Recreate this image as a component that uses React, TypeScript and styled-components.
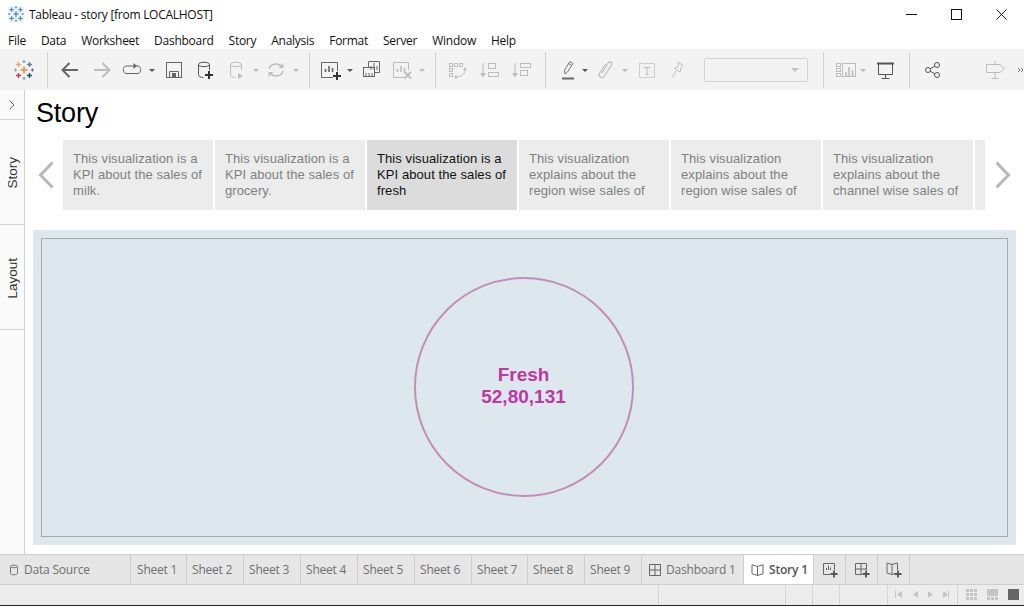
import React from "react";
import styled, { createGlobalStyle } from "styled-components";

const GlobalStyle = createGlobalStyle`
  html, body { margin: 0; padding: 0; background: #fff; }
  body { font-family: "Liberation Sans", Arial, sans-serif; }
`;

const Page = styled.div`
  width: 1024px;
  height: 606px;
  display: flex;
  flex-direction: column;
  overflow: hidden;
  background: #fff;
`;

const TitleBar = styled.div`
  height: 28px;
  display: flex;
  align-items: center;
  padding-left: 8px;
  font: 12px "Open Sans", sans-serif;
  letter-spacing: -0.27px;
  color: #111;
  svg { margin-right: 5px; }
`;

const WindowControls = styled.div`
  margin-left: auto;
  display: flex;
  svg { display: block; margin: 0; }
`;

const WindowButton = styled.div`
  width: 45px;
  height: 26px;
  display: flex;
  align-items: center;
  justify-content: center;
`;

const MenuBar = styled.div`
  height: 21px;
  display: flex;
  align-items: center;
  padding: 3px 0 0 8px;
  box-sizing: border-box;
  gap: 15px;
  font: 12px "Open Sans", sans-serif;
  letter-spacing: -0.27px;
  color: #111;
`;

const Toolbar = styled.div`
  height: 41px;
  box-sizing: border-box;
  padding-top: 1px;
  display: flex;
  align-items: center;
  background: #f3f3f3;
`;

const Tool = styled.span<{ $ml: number }>`
  flex: none;
  width: 24px;
  height: 24px;
  margin-left: ${(p) => p.$ml}px;
  svg { display: block; }
`;

const Caret = styled.span<{ $ml: number; $off?: boolean }>`
  flex: none;
  width: 8px;
  margin-left: ${(p) => p.$ml}px;
  display: flex;
  justify-content: center;
  &::before {
    content: "";
    border-left: 3px solid transparent;
    border-right: 3px solid transparent;
    border-top: 3px solid ${(p) => (p.$off ? "#bdbdbd" : "#555")};
  }
`;

const Divider = styled.span<{ $ml: number }>`
  flex: none;
  width: 1px;
  height: 36px;
  margin-left: ${(p) => p.$ml}px;
  background: #d2d2d2;
`;

const DisabledSelect = styled.div<{ $ml: number }>`
  flex: none;
  width: 104px;
  height: 24px;
  box-sizing: border-box;
  margin-left: ${(p) => p.$ml}px;
  padding-right: 8px;
  border: 1px solid #d4d4d4;
  border-radius: 2px;
  display: flex;
  align-items: center;
  justify-content: flex-end;
  &::after {
    content: "";
    border-left: 4px solid transparent;
    border-right: 4px solid transparent;
    border-top: 4px solid #c4c4c4;
  }
`;

const Body = styled.div`
  flex: 1;
  display: flex;
  min-height: 0;
`;

const SideRail = styled.div`
  width: 25px;
  flex: none;
  box-sizing: border-box;
  background: #fafafa;
  border-right: 1px solid #d0d0d0;
`;

const RailToggle = styled.div`
  height: 30px;
  box-sizing: border-box;
  border-bottom: 1px solid #d0d0d0;
  display: flex;
  align-items: center;
  justify-content: center;
`;

const RailTab = styled.div`
  height: 105px;
  box-sizing: border-box;
  padding-top: 2px;
  border-bottom: 1px solid #d0d0d0;
  display: flex;
  align-items: center;
  justify-content: center;
  color: #333;
  font-size: 13.5px;
  span {
    writing-mode: vertical-rl;
    transform: rotate(180deg);
  }
`;

const Content = styled.div`
  flex: 1;
  min-width: 0;
  display: flex;
  flex-direction: column;
`;

const StoryTitle = styled.h1`
  margin: 0;
  height: 50px;
  padding: 7px 0 0 11px;
  box-sizing: border-box;
  font-size: 27px;
  line-height: 32px;
  font-weight: 400;
  letter-spacing: -0.2px;
  color: #000;
`;

const Navigator = styled.div`
  height: 70px;
  display: flex;
`;

const NavArrow = styled.div<{ $w: number; $pad: number }>`
  flex: none;
  width: ${(p) => p.$w}px;
  box-sizing: border-box;
  padding-left: ${(p) => p.$pad}px;
  display: flex;
  align-items: center;
`;

const StoryPoints = styled.div`
  display: flex;
  gap: 2px;
  width: 922px;
  flex: none;
  overflow: hidden;
`;

const StoryPoint = styled.div<{ $active?: boolean }>`
  flex: none;
  width: 150px;
  height: 70px;
  box-sizing: border-box;
  padding: 11px 6px 0 10px;
  overflow: hidden;
  background: ${(p) => (p.$active ? "#dcdcdc" : "#ececec")};
  color: ${(p) => (p.$active ? "#111" : "#808080")};
  font-size: 13px;
  line-height: 16px;
  letter-spacing: 0.08px;
`;

const Dashboard = styled.div`
  margin: 20px 0 0 8px;
  width: 983px;
  height: 315px;
  box-sizing: border-box;
  padding: 8px;
  background: #dce8ee;
`;

const Worksheet = styled.div`
  height: 100%;
  box-sizing: border-box;
  padding: 0 2px 2px 0;
  border: 1px solid #aaa;
  display: flex;
  align-items: center;
  justify-content: center;
`;

const KpiCircle = styled.div`
  width: 220px;
  height: 220px;
  box-sizing: border-box;
  padding-bottom: 2px;
  border: 2px solid #c58db4;
  border-radius: 50%;
  display: flex;
  flex-direction: column;
  align-items: center;
  justify-content: center;
  color: #bf37a2;
  font-size: 19px;
  font-weight: 700;
  line-height: 22px;
`;

const TabBar = styled.div`
  height: 31px;
  box-sizing: border-box;
  display: flex;
  background: #e6e6e6;
  border-top: 1px solid #cfcfcf;
  border-bottom: 1px solid #cfcfcf;
`;

const SheetTab = styled.div<{ $w: number; $active?: boolean; $pad?: number }>`
  flex: none;
  width: ${(p) => p.$w}px;
  box-sizing: border-box;
  padding-left: ${(p) => p.$pad ?? 5}px;
  display: flex;
  align-items: center;
  gap: 5px;
  border-right: 1px solid #cdcdcd;
  background: ${(p) => (p.$active ? "#fff" : "transparent")};
  color: ${(p) => (p.$active ? "#555" : "#6f6f6f")};
  font: ${(p) => (p.$active ? 600 : 400)} 12px "Open Sans", sans-serif;
  letter-spacing: -0.2px;
  svg { flex: none; display: block; }
`;

const AddTab = styled.div<{ $w: number }>`
  flex: none;
  width: ${(p) => p.$w}px;
  box-sizing: border-box;
  border-right: 1px solid #cdcdcd;
  display: flex;
  align-items: center;
  justify-content: center;
`;

const StatusBar = styled.div`
  height: 20px;
  display: flex;
  background: #ececec;
`;

const StatusCell = styled.div<{ $w: number }>`
  flex: none;
  width: ${(p) => p.$w}px;
  box-sizing: border-box;
  border-right: 1px solid #d4d4d4;
`;

const StatusControls = styled.div`
  flex: 1;
  display: flex;
  align-items: center;
  svg { display: block; }
`;

const BottomEdge = styled.div`
  height: 1px;
  flex: none;
  background: #222;
`;

const ON = "#666";
const OFF = "#bdbdbd";

type LogoColors = {
  center: string;
  corners: [string, string, string, string];
  sides: [string, string, string, string];
};

const colorLogo: LogoColors = {
  center: "#e8883a",
  corners: ["#eda35c", "#5b7f99", "#c5394b", "#1f4f80"],
  sides: ["#7aa6b4", "#6fa8bd", "#59659c", "#7f9dc9"],
};

const blueLogo: LogoColors = {
  center: "#2f7fb5",
  corners: ["#3b8ac0", "#3b8ac0", "#3b8ac0", "#3b8ac0"],
  sides: ["#5ba2cf", "#5ba2cf", "#5ba2cf", "#5ba2cf"],
};

function PlusLogo({ size, box, colors, tile }: { size: number; box: string; colors: LogoColors; tile?: boolean }) {
  const plus = (x: number, y: number, r: number, col: string, w: number) => (
    <path d={`M${x - r} ${y}H${x + r}M${x} ${y - r}V${y + r}`} stroke={col} strokeWidth={w} />
  );
  return (
    <svg width={size} height={size} viewBox={box} fill="none">
      {tile && <rect x="0" y="0" width="20" height="20" fill="#eef3f7" />}
      {plus(10, 10, 3.5, colors.center, 1.5)}
      {plus(4.5, 4.5, 2.6, colors.corners[0], 1.4)}
      {plus(15.5, 4.5, 2.6, colors.corners[1], 1.4)}
      {plus(4.5, 15.5, 2.6, colors.corners[2], 1.4)}
      {plus(15.5, 15.5, 2.6, colors.corners[3], 1.4)}
      {plus(10, 1.6, 1.5, colors.sides[0], 1.2)}
      {plus(1.6, 10, 1.5, colors.sides[1], 1.2)}
      {plus(18.4, 10, 1.5, colors.sides[2], 1.2)}
      {plus(10, 18.4, 1.5, colors.sides[3], 1.2)}
    </svg>
  );
}

const Icon = ({ ml, children }: { ml: number; children: React.ReactNode }) => (
  <Tool $ml={ml}>
    <svg width="24" height="24" viewBox="0 0 24 24" fill="none" strokeWidth="1">
      {children}
    </svg>
  </Tool>
);

const Plus = ({ x, y, color = "#333" }: { x: number; y: number; color?: string }) => (
  <path d={`M${x - 4} ${y}H${x + 4}M${x} ${y - 4}V${y + 4}`} stroke={color} strokeWidth="2" />
);

const Cylinder = ({ color, dx = 0 }: { color: string; dx?: number }) => (
  <g stroke={color} transform={`translate(${dx} 0)`}>
    <path d="M4.500 6.500C4.500 3.500 15.500 3.500 15.500 6.500V12M4.500 6.500C4.500 9.300 15.500 9.300 15.500 6.500M4.500 6.500V16.500C4.500 18.500 6.500 19.500 9.500 19.500" />
  </g>
);

const chartBars = (color: string, x = 7) => (
  <path d={`M${x + 0.5} 14V11M${x + 4} 14V8M${x + 7.5} 14V10`} stroke={color} strokeWidth="1.6" />
);

const tabs = ["Sheet 1", "Sheet 2", "Sheet 3", "Sheet 4", "Sheet 5", "Sheet 6", "Sheet 7", "Sheet 8", "Sheet 9"];
const tabWidths = [56, 57, 57, 57, 57, 57, 56, 57, 57];

const points = [
  { id: 1, text: "This visualization is a KPI about the sales of milk." },
  { id: 2, text: "This visualization is a KPI about the sales of grocery." },
  { id: 3, text: "This visualization is a KPI about the sales of fresh", active: true },
  { id: 4, text: "This visualization explains about the region wise sales of" },
  { id: 5, text: "This visualization explains about the region wise sales of" },
  { id: 6, text: "This visualization explains about the channel wise sales of" },
  { id: 7, text: "" },
];

const menus = ["File", "Data", "Worksheet", "Dashboard", "Story", "Analysis", "Format", "Server", "Window", "Help"];

export default function App() {
  return (
    <Page>
      <GlobalStyle />
      <TitleBar>
        <PlusLogo size={16} box="0 0 20 20" colors={blueLogo} tile />
        Tableau - story [from LOCALHOST]
        <WindowControls>
          <WindowButton>
            <svg width="11" height="11" viewBox="0 0 11 11"><path d="M0 5.500H11" stroke="#111" /></svg>
          </WindowButton>
          <WindowButton>
            <svg width="11" height="11" viewBox="0 0 11 11" fill="none"><rect x=".5" y=".5" width="10" height="10" stroke="#111" /></svg>
          </WindowButton>
          <WindowButton>
            <svg width="11" height="11" viewBox="0 0 11 11" fill="none"><path d="M.5 .5L10.500 10.500M10.500 .5L.5 10.500" stroke="#111" /></svg>
          </WindowButton>
        </WindowControls>
      </TitleBar>

      <MenuBar>
        {menus.map((m) => (
          <span key={m}>{m}</span>
        ))}
      </MenuBar>

      <Toolbar>
        <Tool $ml={12}>
          <PlusLogo size={24} box="-2 -2 24 24" colors={colorLogo} />
        </Tool>
        <Divider $ml={11} />
        <Icon ml={10}>
          <path d="M4 12H20M11.500 5L4.500 12L11.500 19" stroke={ON} strokeWidth="2" />
        </Icon>
        <Icon ml={8}>
          <path d="M4 12H20M12.500 5L19.500 12L12.500 19" stroke={OFF} strokeWidth="2" />
        </Icon>
        <Icon ml={6}>
          <path d="M14 8H6C2.500 8 2.500 15.500 6 15.500H18C21.500 15.500 21.500 8 18 8H16" stroke={ON} />
          <path d="M13.500 5V11L17 8Z" fill={ON} />
        </Icon>
        <Caret $ml={4} />
        <Icon ml={6}>
          <rect x="4.500" y="4.500" width="15" height="15" stroke={ON} />
          <path d="M7.500 19.500V13.500H16.500V19.500" stroke={ON} />
          <rect x="10" y="15" width="4" height="4" fill={ON} />
        </Icon>
        <Icon ml={8}>
          <Cylinder color="#555" />
          <Plus x={15} y={17} />
        </Icon>
        <Icon ml={6}>
          <Cylinder color={OFF} dx={2} />
          <path d="M14 15V21L19 18Z" fill={OFF} />
        </Icon>
        <Caret $ml={4} $off />
        <Icon ml={4}>
          <path d="M5 11C6 6 14 4 18 9M19 13C18 18 10 20 6 15" stroke={OFF} strokeWidth="1.4" />
          <path d="M19.500 5V10H14.500ZM4.500 19V14H9.500Z" fill={OFF} />
        </Icon>
        <Caret $ml={4} $off />
        <Divider $ml={9} />
        <Icon ml={8}>
          <path d="M15 19.500H3.500V4.500H19.500V13" stroke={ON} />
          {chartBars(ON)}
          <Plus x={19} y={18} />
        </Icon>
        <Caret $ml={4} />
        <Icon ml={6}>
          <path d="M8.500 9V3.500H19.500V14.500H15" stroke={ON} />
          <rect x="3.500" y="9.500" width="11" height="9" stroke={ON} />
          <path d="M11 12V8M14 12V5M17 12V8" stroke={ON} />
          <path d="M6 18V15M9 18V15M12 18V15" stroke={ON} />
        </Icon>
        <Icon ml={6}>
          <path d="M15 19.500H3.500V4.500H18.500V12" stroke={OFF} />
          {chartBars(OFF)}
          <path d="M14.500 14L21 20.500M21 14L14.500 20.500" stroke={OFF} strokeWidth="2" />
        </Icon>
        <Caret $ml={4} $off />
        <Divider $ml={9} />
        <Icon ml={9}>
          <g stroke={OFF}>
            <rect x="4.500" y="5.500" width="3" height="3" />
            <rect x="9.500" y="5.500" width="3" height="3" />
            <rect x="14.500" y="5.500" width="3" height="3" />
            <rect x="4.500" y="10.500" width="3" height="3" />
            <rect x="4.500" y="15.500" width="3" height="3" />
            <path d="M20 11C20.500 15 17 19 11 19" />
          </g>
          <path d="M11.500 16.500V21.500L9 19ZM20 9L22 12H18Z" fill={OFF} />
        </Icon>
        <Icon ml={9}>
          <path d="M5 5V17" stroke={OFF} />
          <path d="M2 15H8L5 19.500Z" fill={OFF} />
          <rect x="10.500" y="5.500" width="7" height="5" stroke={OFF} />
          <rect x="10.500" y="14.500" width="10" height="4" stroke={OFF} />
        </Icon>
        <Icon ml={8}>
          <path d="M5 5V17" stroke={OFF} />
          <path d="M2 15H8L5 19.500Z" fill={OFF} />
          <rect x="10.500" y="5.500" width="10" height="4" stroke={OFF} />
          <rect x="10.500" y="12.500" width="7" height="5" stroke={OFF} />
        </Icon>
        <Divider $ml={11} />
        <Icon ml={10}>
          <path d="M9 16L8.500 12L14 3.500L17 5.500L11.500 14ZM12.500 5.500L15.500 7.500" stroke="#777" />
          <path d="M6 20.500H18" stroke="#666" strokeWidth="2" />
        </Icon>
        <Caret $ml={1} />
        <Icon ml={4}>
          <path d="M9 15L15 5C17 2.500 20 4.500 18.500 7L11.500 18C9.500 21 5 19 6.500 15.500L12.500 6" stroke={OFF} strokeWidth="1.2" />
        </Icon>
        <Caret $ml={4} $off />
        <Icon ml={6}>
          <rect x="4.500" y="5.500" width="15" height="14" stroke={OFF} strokeDasharray="2 1" />
          <path d="M8.500 9.500H15.500M12 9.500V16.500M10.500 16.500H13.500" stroke={OFF} />
        </Icon>
        <Icon ml={6}>
          <path d="M13 4L18 7.500L16 9.500L15 14L9.500 10.500L13.500 8ZM11 13L7.500 19" stroke={OFF} />
        </Icon>
        <DisabledSelect $ml={15} />
        <Divider $ml={15} />
        <Icon ml={10}>
          <g stroke={OFF}>
            <rect x="2.500" y="5.500" width="4" height="3" />
            <rect x="2.500" y="10.500" width="4" height="3" />
            <rect x="2.500" y="15.500" width="4" height="3" />
            <rect x="8.500" y="5.500" width="13" height="13" />
          </g>
          <path d="M12 18V14M15 18V9M18.500 18V12" stroke={OFF} strokeWidth="1.6" />
        </Icon>
        <Caret $ml={1} $off />
        <Icon ml={6}>
          <path d="M4 5.500H21" stroke="#555" strokeWidth="2" />
          <path d="M5.500 6V16.500H19.500V6M12.500 16.500V21M8.500 20.500H16.500" stroke="#555" />
        </Icon>
        <Divider $ml={12} />
        <Icon ml={10}>
          <circle cx="17" cy="7" r="2.500" stroke="#555" />
          <circle cx="8" cy="12" r="2.500" stroke="#555" />
          <circle cx="17" cy="17" r="2.500" stroke="#555" />
          <path d="M10.200 10.800L14.800 8.200M10.200 13.200L14.800 15.800" stroke="#555" />
        </Icon>
        <Icon ml={39}>
          <path d="M3.500 6.500H17L21.500 10.500L17 14.500H3.500ZM12 3V6.500M12 14.500V21M8.500 20.500H15.500" stroke={OFF} />
        </Icon>
        <Tool $ml={9}>
          <svg width="8" height="24" viewBox="0 0 8 24" fill="none">
            <path d="M2 10L4 12L2 14M5 10L7 12L5 14" stroke="#777" />
          </svg>
        </Tool>
      </Toolbar>

      <Body>
        <SideRail>
          <RailToggle>
            <svg width="8" height="12" viewBox="0 0 8 12" fill="none">
              <path d="M1.500 1.500L6 6L1.500 10.500" stroke="#666" />
            </svg>
          </RailToggle>
          <RailTab><span>Story</span></RailTab>
          <RailTab><span>Layout</span></RailTab>
        </SideRail>

        <Content>
          <StoryTitle>Story</StoryTitle>
          <Navigator>
            <NavArrow $w={38} $pad={13}>
              <svg width="16" height="28" viewBox="0 0 16 28" fill="none">
                <path d="M14.500 1.500L2.500 14L14.500 26.500" stroke="#b8b8b8" strokeWidth="3" />
              </svg>
            </NavArrow>
            <StoryPoints>
              {points.map((p) => (
                <StoryPoint key={p.id} $active={p.active}>
                  {p.text}
                </StoryPoint>
              ))}
            </StoryPoints>
            <NavArrow $w={39} $pad={10}>
              <svg width="16" height="28" viewBox="0 0 16 28" fill="none">
                <path d="M1.500 1.500L13.500 14L1.500 26.500" stroke="#b8b8b8" strokeWidth="3" />
              </svg>
            </NavArrow>
          </Navigator>
          <Dashboard>
            <Worksheet>
              <KpiCircle>
                <div>Fresh</div>
                <div>52,80,131</div>
              </KpiCircle>
            </Worksheet>
          </Dashboard>
        </Content>
      </Body>

      <TabBar>
        <SheetTab $w={131} $pad={9}>
          <svg width="10" height="12" viewBox="0 0 10 12" fill="none">
            <path d="M1.500 2.500C1.500 .8 8.500 .8 8.500 2.500V9.500C8.500 11.200 1.500 11.200 1.500 9.500ZM1.500 2.500C1.500 4 8.500 4 8.500 2.500" stroke="#777" />
          </svg>
          Data Source
        </SheetTab>
        {tabs.map((t, i) => (
          <SheetTab key={t} $w={tabWidths[i]} $pad={i === 0 ? 6 : 5}>{t}</SheetTab>
        ))}
        <SheetTab $w={102} $pad={7}>
          <svg width="12" height="12" viewBox="0 0 12 12" fill="none">
            <path d="M.5 .5H11.500V11.500H.5ZM.5 6H11.500M6 .5V11.500" stroke="#666" />
          </svg>
          Dashboard 1
        </SheetTab>
        <SheetTab $w={70} $active $pad={7}>
          <svg width="13" height="12" viewBox="0 0 13 12" fill="none">
            <path d="M6.500 2.500L1 .8V9.800L6.500 11.500L12 9.800V.8ZM6.500 2.500V11.500" stroke="#666" />
          </svg>
          Story 1
        </SheetTab>
        <AddTab $w={32}>
          <svg width="16" height="16" viewBox="0 0 16 16" fill="none">
            <path d="M8 12.500H1.500V1.500H12.500V8M4.500 8V6M6.500 8V3.500M8.500 8V5.500" stroke="#666" />
            <path d="M8.500 12H15.500M12 8.500V15.500" stroke="#555" strokeWidth="1.8" />
          </svg>
        </AddTab>
        <AddTab $w={32}>
          <svg width="16" height="16" viewBox="0 0 16 16" fill="none">
            <path d="M8 12.500H1.500V1.500H12.500V8M1.500 7H12.500M7 1.500V12.500" stroke="#666" />
            <path d="M8.500 12H15.500M12 8.500V15.500" stroke="#555" strokeWidth="1.8" />
          </svg>
        </AddTab>
        <AddTab $w={32}>
          <svg width="16" height="16" viewBox="0 0 16 16" fill="none">
            <path d="M6 2.500L1 1V11L6 12.500L9 11.500M6 2.500L11.500 1V8M6 2.500V12.500" stroke="#666" />
            <path d="M8.500 12H15.500M12 8.500V15.500" stroke="#555" strokeWidth="1.8" />
          </svg>
        </AddTab>
      </TabBar>

      <StatusBar>
        <StatusCell $w={659} />
        <StatusCell $w={127} />
        <StatusCell $w={27} />
        <StatusCell $w={27} />
        <StatusCell $w={48} />
        <StatusControls>
          <svg width="136" height="20" viewBox="0 0 136 20" fill="none">
            <g fill="#c4c4c4">
              <path d="M7 6V13H8V6ZM14 6L9 9.500L14 13Z" />
              <path d="M30 6L25 9.500L30 13Z" />
              <path d="M40 6L45 9.500L40 13Z" />
              <path d="M55 6L60 9.500L55 13ZM60 6V13H61V6Z" />
            </g>
            <path d="M69.500 0V20" stroke="#d4d4d4" />
            <g fill="#c4c4c4">
              {[0, 1, 2].flatMap((r) =>
                [0, 1, 2].map((c) => <rect key={`${r}-${c}`} x={78 + c * 4} y={4 + r * 4} width="3" height="3" />)
              )}
              <rect x="99" y="4" width="11" height="7" />
              <rect x="99" y="12" width="3" height="3" />
              <rect x="103" y="12" width="3" height="3" />
              <rect x="107" y="12" width="3" height="3" />
            </g>
            <rect x="120" y="4" width="11" height="11" fill="#666" />
          </svg>
        </StatusControls>
      </StatusBar>
      <BottomEdge />
    </Page>
  );
}
